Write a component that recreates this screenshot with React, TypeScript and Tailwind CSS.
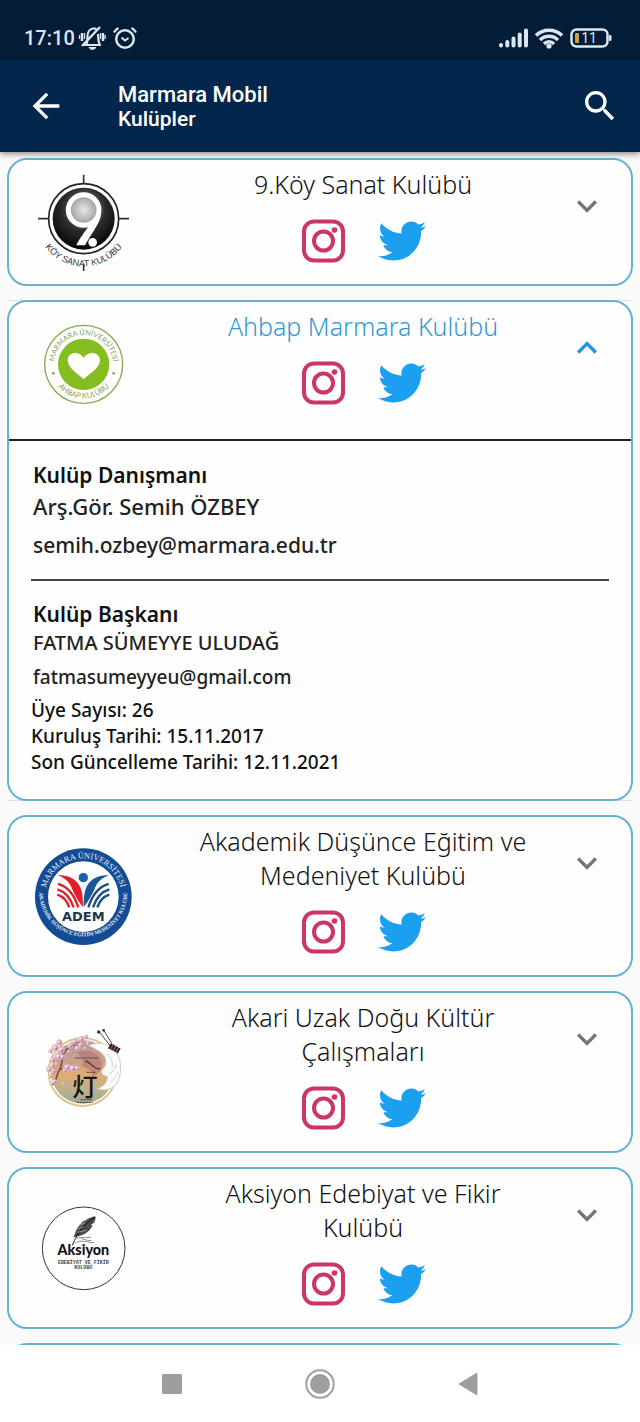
import { useState, type ReactNode } from "react";
import { FaTwitter } from "react-icons/fa";
import { MdArrowBack, MdSearch, MdExpandMore } from "react-icons/md";

function KoySanatLogo() {
  return (
    <svg viewBox="0 0 110 110" className="size-[110px]" role="img" aria-label="9.Köy Sanat Kulübü logosu">
      <defs>
        <radialGradient id="koyDisc" cx="0.5" cy="0.35" r="0.65">
          <stop offset="0" stopColor="#999" />
          <stop offset="0.55" stopColor="#2a2a2a" />
          <stop offset="1" stopColor="#050505" />
        </radialGradient>
        <radialGradient id="koyBall">
          <stop offset="0" stopColor="#e8e8e8" />
          <stop offset="1" stopColor="#999" />
        </radialGradient>
        <path id="koyArc" d="M107 190 A144 144 0 0 0 395 190" />
      </defs>
      <g transform="translate(-29 -12) scale(0.33333)">
        <path d="M251 59v28M251 328v20M114 191h32M357 191h30" stroke="#333" strokeWidth="5" />
        <circle cx="251" cy="191" r="105" fill="#fff" stroke="#222" strokeWidth="5" />
        <circle cx="251" cy="191" r="93" fill="url(#koyDisc)" />
        <path d="M303 180C297 210 276 232 255 271L229 271C238 250 254 232 270 208Z" fill="#fff" />
        <circle cx="251" cy="165" r="46" fill="url(#koyBall)" stroke="#fff" strokeWidth="15" />
        <circle cx="278" cy="262" r="13" fill="#fff" />
        <text fontSize="27" fill="#333" textAnchor="middle" className="font-['Liberation_Sans',sans-serif]">
          <textPath href="#koyArc" startOffset="50%">KÖY SANAT KULÜBÜ</textPath>
        </text>
      </g>
    </svg>
  );
}

function AhbapLogo() {
  return (
    <svg viewBox="0 0 110 110" className="size-[110px]" role="img" aria-label="Ahbap Marmara Kulübü logosu">
      <defs>
        <path id="ahbapTop" d="M163 208a88 88 0 0 1 176 0" />
        <path id="ahbapBottom" d="M149 208a102 102 0 0 0 204 0" />
      </defs>
      <g transform="translate(-29 -14) scale(0.33333)">
        <circle cx="251" cy="208" r="117" fill="#fff" stroke="#86a94c" strokeWidth="4" />
        <circle cx="251" cy="208" r="77" fill="#84bd20" />
        <path d="M251 252C239 241 203 220 203 196C203 171 238 166 251 189C264 166 300 171 300 196C300 220 263 241 251 252Z" fill="#fff" />
        <circle cx="160" cy="235" r="4" fill="#84a83f" />
        <circle cx="341" cy="235" r="4" fill="#84a83f" />
        <g fill="#8ba15c" textAnchor="middle" className="font-[Lato,sans-serif]">
          <text fontSize="22"><textPath href="#ahbapTop" startOffset="50%">MARMARA ÜNİVERSİTESİ</textPath></text>
          <text fontSize="23"><textPath href="#ahbapBottom" startOffset="50%">AHBAP KULÜBÜ</textPath></text>
        </g>
      </g>
    </svg>
  );
}

function AdemLogo() {
  return (
    <svg viewBox="0 0 110 110" className="size-[110px]" role="img" aria-label="ADEM logosu">
      <defs>
        <path id="ademTop" d="M75 185a115 115 0 0 1 230 0" />
        <path id="ademBottom" d="M58 172a132 132 0 0 0 264 0" />
      </defs>
      <g transform="translate(-9 -6) scale(0.33333)">
        <circle cx="190" cy="185" r="145" fill="#134b94" />
        <circle cx="190" cy="185" r="106" fill="#fff" />
        <circle cx="190" cy="128" r="14" fill="#1764a8" />
        <path d="M112 120C146 120 166 132 176 148C186 162 189 184 189 216C172 196 160 170 152 152C142 134 128 126 112 120Z" fill="#e0202b" />
        <path d="M268 120C234 120 214 132 204 148C194 162 191 184 191 216C208 196 220 170 228 152C238 134 252 126 268 120Z" fill="#1b5797" />
        <g fill="none" strokeWidth="7">
          <path d="M114 147C143 155 163 180 175 217M112 163C136 170 152 190 161 217M112 179C130 185 142 198 148 217" stroke="#d9202c" />
          <path d="M266 147C237 155 217 180 205 217M268 163C244 170 228 190 219 217M268 179C250 185 238 198 232 217" stroke="#194c85" />
        </g>
        <text x="190" y="259" fontSize="39" fontWeight="700" fill="#253549" textAnchor="middle" className="font-['DejaVu_Sans',sans-serif]">ADEM</text>
        <g fill="#e7eef8" textAnchor="middle" className="font-['Liberation_Serif',serif]">
          <text fontSize="25"><textPath href="#ademTop" startOffset="50%">MARMARA ÜNİVERSİTESİ</textPath></text>
          <text fontSize="16" fontWeight="700"><textPath href="#ademBottom" startOffset="50%">AKADEMİK DÜŞÜNCE EĞİTİM MEDENİYET KULÜBÜ</textPath></text>
        </g>
      </g>
    </svg>
  );
}

const blossoms = [
  [118, 82, 9], [106, 98, 10], [124, 104, 11], [92, 108, 7], [116, 124, 11], [98, 134, 9], [128, 126, 8],
  [88, 162, 9], [100, 168, 8], [104, 200, 8], [92, 185, 5], [150, 92, 9], [164, 80, 9], [172, 100, 8],
  [184, 72, 9], [198, 66, 7], [182, 90, 8], [204, 84, 7], [142, 156, 10], [158, 160, 11], [172, 160, 8],
  [134, 166, 7], [130, 206, 5], [146, 110, 5], [196, 100, 5], [110, 148, 6],
];

function AkariLogo() {
  return (
    <svg viewBox="0 0 110 110" className="size-[110px]" role="img" aria-label="Akari logosu">
      <defs>
        <linearGradient id="akariSky" x1="0" y1="0" x2="0" y2="1">
          <stop offset="0" stopColor="#b59a94" />
          <stop offset="0.3" stopColor="#c9a08c" />
          <stop offset="0.55" stopColor="#e0ad72" />
          <stop offset="0.78" stopColor="#b9b38e" />
          <stop offset="1" stopColor="#9eaa93" />
        </linearGradient>
      </defs>
      <g transform="translate(-9 -2) scale(0.33333)">
        <circle cx="188" cy="171" r="102" fill="#fff" stroke="#dfc48d" strokeWidth="6" />
        <circle cx="188" cy="171" r="95" fill="url(#akariSky)" />
        <path d="M170 112C200 100 238 112 246 144C250 166 230 180 214 188C224 172 206 160 182 152C196 146 186 126 170 112Z" fill="#b27773" opacity=".65" />
        <path d="M206 91C238 78 272 86 285 108C302 124 307 162 296 194C287 218 262 232 232 221C254 214 263 200 262 184C243 182 238 168 254 156C264 138 254 118 236 108Z" fill="#fbfbfa" stroke="#d0cac2" strokeWidth="3" />
        <path d="M258 116C272 124 281 140 276 158M267 178C281 170 287 158 287 146M271 200C283 194 291 182 293 170" fill="none" stroke="#d5d0c9" strokeWidth="3" />
        <path d="M268 92L298 108" stroke="#3b2527" strokeWidth="17" strokeDasharray="8 1" />
        <path d="M270 92L236 48M276 86L250 44" stroke="#4a4545" strokeWidth="3" />
        <circle cx="236" cy="51" r="5" fill="#333" />
        <circle cx="251" cy="46" r="4" fill="#333" />
        <path d="M98 210C112 196 108 178 120 162C130 142 122 124 136 108C146 94 162 92 176 82M120 162C136 166 148 158 162 162" fill="none" stroke="#74534f" strokeWidth="5" />
        {blossoms.map(([x, y, r]) => (
          <g key={`${x}-${y}`}>
            <circle cx={x} cy={y} r={r} fill="#d9aabd" />
            <circle cx={x - 3} cy={y - 2} r={r / 2} fill="#f2d4de" />
            <circle cx={x + 3} cy={y + 3} r={r / 4} fill="#8f5b75" />
          </g>
        ))}
        <path d="M166 129H238M200 172H228M182 254H218M170 262H218" stroke="#4f403b" strokeWidth="3" strokeDasharray="7 2" />
        <path d="M196 138C212 140 216 160 240 162" fill="none" stroke="#5c302d" strokeWidth="4" />
        <text x="195" y="243" fontSize="76" fontWeight="500" fill="#171514" textAnchor="middle" className="font-['Noto_Sans_CJK_JP',sans-serif]">灯</text>
      </g>
    </svg>
  );
}

function AksiyonLogo() {
  return (
    <svg viewBox="0 0 110 110" className="size-[110px]" role="img" aria-label="Aksiyon logosu">
      <g transform="translate(-9 -3) scale(0.33333)">
        <circle cx="191" cy="175" r="124" fill="#fff" stroke="#333" strokeWidth="3" />
        <path d="M226 79C198 84 172 104 164 134L160 142L174 139C198 134 213 119 218 105L211 106L222 98C226 91 228 85 226 79Z" fill="#4a4a4a" />
        <path d="M224 82C196 100 174 124 157 166" fill="none" stroke="#111" strokeWidth="3" />
        <path d="M178 106L195 99M174 117L190 110M172 127L199 121M185 96L200 90" stroke="#999" strokeWidth="3" />
        <path d="M162 148C178 138 196 146 213 141M166 158C184 148 202 158 222 158M184 145C196 150 204 152 214 152" fill="none" stroke="#888" strokeWidth="3" />
        <text x="190" y="194" fontSize="43" fontWeight="900" fill="#111" textAnchor="middle" className="font-[Lato,sans-serif]">Aksiyon</text>
        <g fontSize="15" fontWeight="700" fill="#444" textAnchor="middle" className="font-['Liberation_Mono',monospace]">
          <text x="190" y="221">EDEBİYAT VE FİKİR</text>
          <text x="190" y="238">KULÜBÜ</text>
        </g>
      </g>
    </svg>
  );
}

function InstagramIcon() {
  return (
    <svg viewBox="0 0 44 44" className="size-11" fill="none" stroke="#cc3569" strokeWidth="4" aria-hidden="true">
      <rect x="3" y="2.500" width="39" height="39" rx="10" />
      <circle cx="22.500" cy="22" r="9.500" />
      <circle cx="33.500" cy="11" r="2.800" fill="#cc3569" stroke="none" />
    </svg>
  );
}

type Club = { name: string; logo: ReactNode };

const clubs: Club[] = [
  { name: "9.Köy Sanat Kulübü", logo: <KoySanatLogo /> },
  { name: "Ahbap Marmara Kulübü", logo: <AhbapLogo /> },
  { name: "Akademik Düşünce Eğitim ve Medeniyet Kulübü", logo: <AdemLogo /> },
  { name: "Akari Uzak Doğu Kültür Çalışmaları", logo: <AkariLogo /> },
  { name: "Aksiyon Edebiyat ve Fikir Kulübü", logo: <AksiyonLogo /> },
];

function ClubDetails() {
  return (
    <div className="border-t-2 border-[#222] px-[22px] pt-[18px] pb-6 text-[#222]">
      <section className="border-b-2 border-[#444] px-0.5 pb-[18px]">
        <h3 className="text-[21px] leading-8 font-semibold text-[#111]">Kulüp Danışmanı</h3>
        <p className="text-[22px] leading-[30px] font-medium">Arş.Gör. Semih ÖZBEY</p>
        <p className="pt-2 text-[21px] leading-8 font-medium">
          <a href="mailto:semih.ozbey@marmara.edu.tr">semih.ozbey@marmara.edu.tr</a>
        </p>
      </section>
      <section className="px-0.5 pt-[18px]">
        <h3 className="text-[21px] leading-[31px] font-semibold text-[#111]">Kulüp Başkanı</h3>
        <p className="text-[20px] leading-[26px] font-medium">FATMA SÜMEYYE ULUDAĞ</p>
        <p className="pt-2 text-[19px] leading-[26px] font-medium">
          <a href="mailto:fatmasumeyyeu@gmail.com">fatmasumeyyeu@gmail.com</a>
        </p>
      </section>
      <div className="pt-[7px] text-[19px] leading-[26px] font-medium text-[#111]">
        <p>Üye Sayısı: 26</p>
        <p>Kuruluş Tarihi: 15.11.2017</p>
        <p>Son Güncelleme Tarihi: 12.11.2021</p>
      </div>
    </div>
  );
}

function ClubCard({ club, open, onToggle }: { club: Club; open: boolean; onToggle: () => void }) {
  return (
    <li className={open ? "border-y border-[#e2e2e4]" : ""}>
      <article
        className={`rounded-[20px] border-2 border-[#64b3d3] bg-[#fefefe] ${open ? "-my-px" : ""}`}
      >
        <div className={`grid grid-cols-[174px_1fr_88px] ${open ? "pb-[13px]" : ""}`}>
          <div className="flex items-center pl-5">{club.logo}</div>
          <div className="flex flex-col items-center gap-[18px] px-2 pt-[7px] pb-[21px] text-center">
            <h2 className={`text-[25px] leading-[34px] font-light ${open ? "text-[#3398d4]" : "text-[#111]"}`}>
              {club.name}
            </h2>
            <div className="flex h-11 items-center gap-[33px]">
              <a href="#instagram" aria-label={`${club.name} Instagram`}>
                <InstagramIcon />
              </a>
              <a href="#twitter" aria-label={`${club.name} Twitter`}>
                <FaTwitter className="size-12 text-[#1d9ff0]" />
              </a>
            </div>
          </div>
          <button
            type="button"
            aria-expanded={open}
            aria-label={club.name}
            onClick={onToggle}
            className={`mt-[26px] flex size-10 items-center justify-center justify-self-center ${open ? "rotate-180 text-[#2196d9]" : "text-[#757575]"}`}
          >
            <MdExpandMore className="size-10" />
          </button>
        </div>
        {open && <ClubDetails />}
      </article>
    </li>
  );
}

function StatusBar() {
  return (
    <div className="flex h-[60px] shrink-0 items-center justify-between bg-[#031d37] px-6 pt-4 text-[#dbe6f2]">
      <div className="flex items-center gap-[3px]">
        <span className="text-[20px] leading-6 font-medium">17:10</span>
        <svg viewBox="0 0 28 26" className="h-[26px] w-7" fill="none" stroke="currentColor" aria-hidden="true">
          <path d="M6 20h17M8.500 19C9.500 17 9.500 14 9.500 11.500C9.500 7.500 11.500 4 15 3.500C16.500 3.300 18 4 19 5M20 9C20.500 13 20 17 22 20" strokeWidth="2.200" />
          <path d="M4 21L22 2" strokeWidth="2.400" />
          <path d="M4 8v8M25 8v8" strokeWidth="2.500" />
          <path d="M1.500 10v4M27.200 10v4M6.500 8v6M22.500 8v6" strokeWidth="1.300" />
          <path d="M11 22.500C12.500 25 16 25 18 22.500Z" fill="currentColor" strokeWidth="1" />
        </svg>
        <svg viewBox="0 0 24 24" className="ml-1 size-6" fill="none" stroke="currentColor" aria-hidden="true">
          <circle cx="12" cy="13" r="8.800" strokeWidth="2.500" />
          <path d="M1 6.500C2 4.500 3.500 3 5.500 2M23 6.500C22 4.500 20.500 3 18.500 2" strokeWidth="2.200" />
          <path d="M8.500 11.500L12 14.500L15.500 12" strokeWidth="2" />
        </svg>
      </div>
      <div className="mr-1 flex items-center gap-[7px]">
        <svg viewBox="0 0 29 20" className="h-5 w-[29px]" stroke="currentColor" strokeWidth="4" strokeLinecap="round" aria-hidden="true">
          <path d="M2 17.500v-.5M8.300 17.500v-3.500M14.500 17.500v-7M20.700 17.500v-11M27 17.500v-15" />
        </svg>
        <svg viewBox="0 0 28 21" className="h-[21px] w-7" fill="none" stroke="currentColor" strokeWidth="3.400" aria-hidden="true">
          <path d="M1 7.500C8 .5 20 .5 27 7.500M5 12C10 7 18 7 23 12M9 16C12 13 16 13 19 16" />
          <circle cx="14" cy="18" r="2.600" fill="currentColor" stroke="none" />
        </svg>
        <svg viewBox="0 0 42 20" className="h-5 w-[42px]" aria-hidden="true">
          <rect x="1.500" y="1.500" width="36" height="17" rx="5" fill="none" stroke="currentColor" strokeWidth="2.500" />
          <rect x="39" y="7" width="2.500" height="6" rx="1" fill="currentColor" />
          <rect x="5" y="5" width="4" height="10" rx="1" fill="#c9a24a" />
          <text x="19" y="15" fontSize="14" fill="currentColor" textAnchor="middle" className="font-[Roboto,sans-serif]">11</text>
        </svg>
      </div>
    </div>
  );
}

export default function App() {
  const [openIndex, setOpenIndex] = useState(1);

  return (
    <div className="flex h-screen flex-col bg-[#fafafb] font-[Roboto,sans-serif]">
      <StatusBar />
      <header className="relative z-10 flex h-[92px] shrink-0 items-center bg-[#03274c] pr-5 pl-[26px] text-white shadow-[0_2px_6px_rgba(0,0,0,0.45)]">
        <button type="button" aria-label="Geri">
          <MdArrowBack className="size-10" />
        </button>
        <h1 className="ml-[52px] grow pt-0.5 text-[22px] leading-6 font-medium">
          Marmara Mobil
          <span className="block text-[21px]">Kulüpler</span>
        </h1>
        <button type="button" aria-label="Ara">
          <MdSearch className="size-10" />
        </button>
      </header>
      <main className="min-h-0 grow overflow-y-auto px-[7px] pt-[6px] font-['Noto_Sans',sans-serif] [scrollbar-width:none]">
        <ul className="flex flex-col gap-[14px]">
          {clubs.map((club, i) => (
            <ClubCard
              key={club.name}
              club={club}
              open={i === openIndex}
              onToggle={() => setOpenIndex(i === openIndex ? -1 : i)}
            />
          ))}
          <li className="h-32 rounded-[20px] border-2 border-[#64b3d3] bg-[#fefefe]" />
        </ul>
      </main>
      <nav className="flex h-[77px] shrink-0 items-center justify-center gap-[116px] bg-white text-[#9e9e9e]">
        <button type="button" aria-label="Son uygulamalar" className="flex size-8 items-center justify-center">
          <svg viewBox="0 0 20 20" className="size-5" fill="currentColor"><rect width="20" height="20" rx="1" /></svg>
        </button>
        <button type="button" aria-label="Ana ekran" className="flex size-8 items-center justify-center">
          <svg viewBox="0 0 30 30" className="size-[30px]" fill="currentColor">
            <circle cx="15" cy="15" r="13.700" fill="none" stroke="currentColor" strokeWidth="2" />
            <circle cx="15" cy="15" r="10" />
          </svg>
        </button>
        <button type="button" aria-label="Geri dön" className="flex size-8 items-center justify-center">
          <svg viewBox="0 0 20 24" className="h-6 w-5" fill="currentColor"><path d="M19 1v22L1 12Z" stroke="currentColor" strokeLinejoin="round" /></svg>
        </button>
      </nav>
    </div>
  );
}
